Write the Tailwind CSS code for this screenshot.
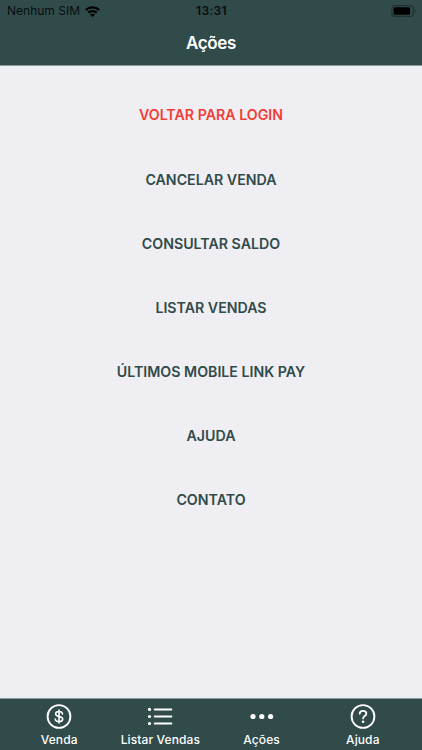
<!DOCTYPE html>
<html lang="pt-BR">
<head>
<meta charset="utf-8">
<meta name="viewport" content="width=device-width, initial-scale=1">
<title>Ações</title>
<script src="https://cdn.jsdelivr.net/npm/@tailwindcss/browser@4"></script>
</head>
<body class="flex h-[750px] w-[422px] flex-col overflow-hidden bg-[#efeef3] font-['Inter','Liberation_Sans',sans-serif]">
  <header class="h-[66px] shrink-0 border-b border-[#8d9b9e] bg-[#304b4a]">
    <div class="grid h-[22px] grid-cols-3 items-center pr-[6px] pl-[7px] text-black">
      <div class="flex items-center gap-[5px]">
        <span class="text-[12px] whitespace-nowrap text-black/85">Nenhum SIM</span>
        <svg class="h-[11px] w-[15px]" viewBox="0 0 15 11" fill="none" stroke="currentColor" stroke-width="2.3">
          <path d="M.8 4C4.6.4 10.4.4 14.2 4M3.2 6.7c2.5-2.2 6.1-2.2 8.6 0"/>
          <path d="M7.5 11 5 8.5c1.4-1.2 3.6-1.2 5 0z" fill="currentColor" stroke="none"/>
        </svg>
      </div>
      <span class="text-center text-[12px] font-semibold tracking-[0.3px] text-black/85">13:31</span>
      <svg class="h-[12px] w-[25px] justify-self-end" viewBox="0 0 25 12">
        <rect x=".9" y=".6" width="21.4" height="10.8" rx="3" fill="none" stroke="#1f3231" stroke-width="1.1"/>
        <rect x="2.6" y="2.3" width="16.5" height="7.4" rx="1.3" fill="#000"/>
        <path d="M23.7 4.2c1.3.6 1.3 3 0 3.6z" fill="#1b2d2c"/>
      </svg>
    </div>
    <h1 class="text-center text-[17px] leading-[43px] font-semibold tracking-[-0.4px] text-white">Ações</h1>
  </header>

  <main class="flex flex-1 flex-col items-center pt-[17px] text-[14.2px] font-semibold text-[#304b4a]">
    <button class="h-[64.15px] shrink-0 text-[#f33d36]">VOLTAR PARA LOGIN</button>
    <button class="h-[64.15px] shrink-0">CANCELAR VENDA</button>
    <button class="h-[64.15px] shrink-0">CONSULTAR SALDO</button>
    <button class="h-[64.15px] shrink-0">LISTAR VENDAS</button>
    <button class="h-[64.15px] shrink-0">ÚLTIMOS MOBILE LINK PAY</button>
    <button class="h-[64.15px] shrink-0">AJUDA</button>
    <button class="h-[64.15px] shrink-0">CONTATO</button>
  </main>

  <nav class="grid h-[52px] shrink-0 grid-cols-4 border-t border-[#8d9b9e] bg-[#304b4a] px-[8.6px] text-[12px] font-medium tracking-[0.12px] text-white">
    <a class="flex flex-col items-center pt-[4px]">
      <svg class="size-[28px] shrink-0" viewBox="0 0 28 28" fill="none" stroke="currentColor" stroke-linecap="round">
        <circle cx="14" cy="13.5" r="11.4" stroke-width="1.9"/>
        <path d="M17.5 10.9c-.2-1.5-1.6-2.4-3.5-2.4s-3.4 1-3.4 2.5c0 3.4 7.1 1.5 7.1 5.1 0 1.6-1.5 2.6-3.6 2.6-2.2 0-3.7-1-3.8-2.7M14 7.1v12.9" stroke-width="1.6"/>
      </svg>
      <span class="leading-[18px] whitespace-nowrap">Venda</span>
    </a>
    <a class="flex flex-col items-center pt-[4px]">
      <svg class="size-[28px] shrink-0" viewBox="0 0 28 28" fill="none" stroke="currentColor" stroke-linecap="round">
        <path d="M8.7 6.4h16.6M8.7 13.5h16.6M8.7 20.6h16.6" stroke-width="2"/>
        <g fill="currentColor" stroke="none"><circle cx="3.5" cy="6.4" r="1.6"/><circle cx="3.5" cy="13.5" r="1.6"/><circle cx="3.5" cy="20.6" r="1.6"/></g>
      </svg>
      <span class="leading-[18px] whitespace-nowrap">Listar Vendas</span>
    </a>
    <a class="flex flex-col items-center pt-[4px]">
      <svg class="size-[28px] shrink-0" viewBox="0 0 28 28" fill="currentColor">
        <circle cx="5" cy="13.5" r="2.6"/><circle cx="13.8" cy="13.5" r="2.6"/><circle cx="22.6" cy="13.5" r="2.6"/>
      </svg>
      <span class="leading-[18px] whitespace-nowrap">Ações</span>
    </a>
    <a class="flex flex-col items-center pt-[4px]">
      <svg class="size-[28px] shrink-0" viewBox="0 0 28 28" fill="none" stroke="currentColor" stroke-linecap="round">
        <circle cx="14" cy="13.5" r="11.4" stroke-width="1.9"/>
        <path d="M10.7 10.7c0-1.8 1.3-2.9 3.3-2.9s3.4 1.1 3.4 2.8c0 2.4-3.3 2.5-3.3 4.8" stroke-width="1.8"/>
        <circle cx="14.1" cy="18.7" r="1.3" fill="currentColor" stroke="none"/>
      </svg>
      <span class="leading-[18px] whitespace-nowrap">Ajuda</span>
    </a>
  </nav>
</body>
</html>
